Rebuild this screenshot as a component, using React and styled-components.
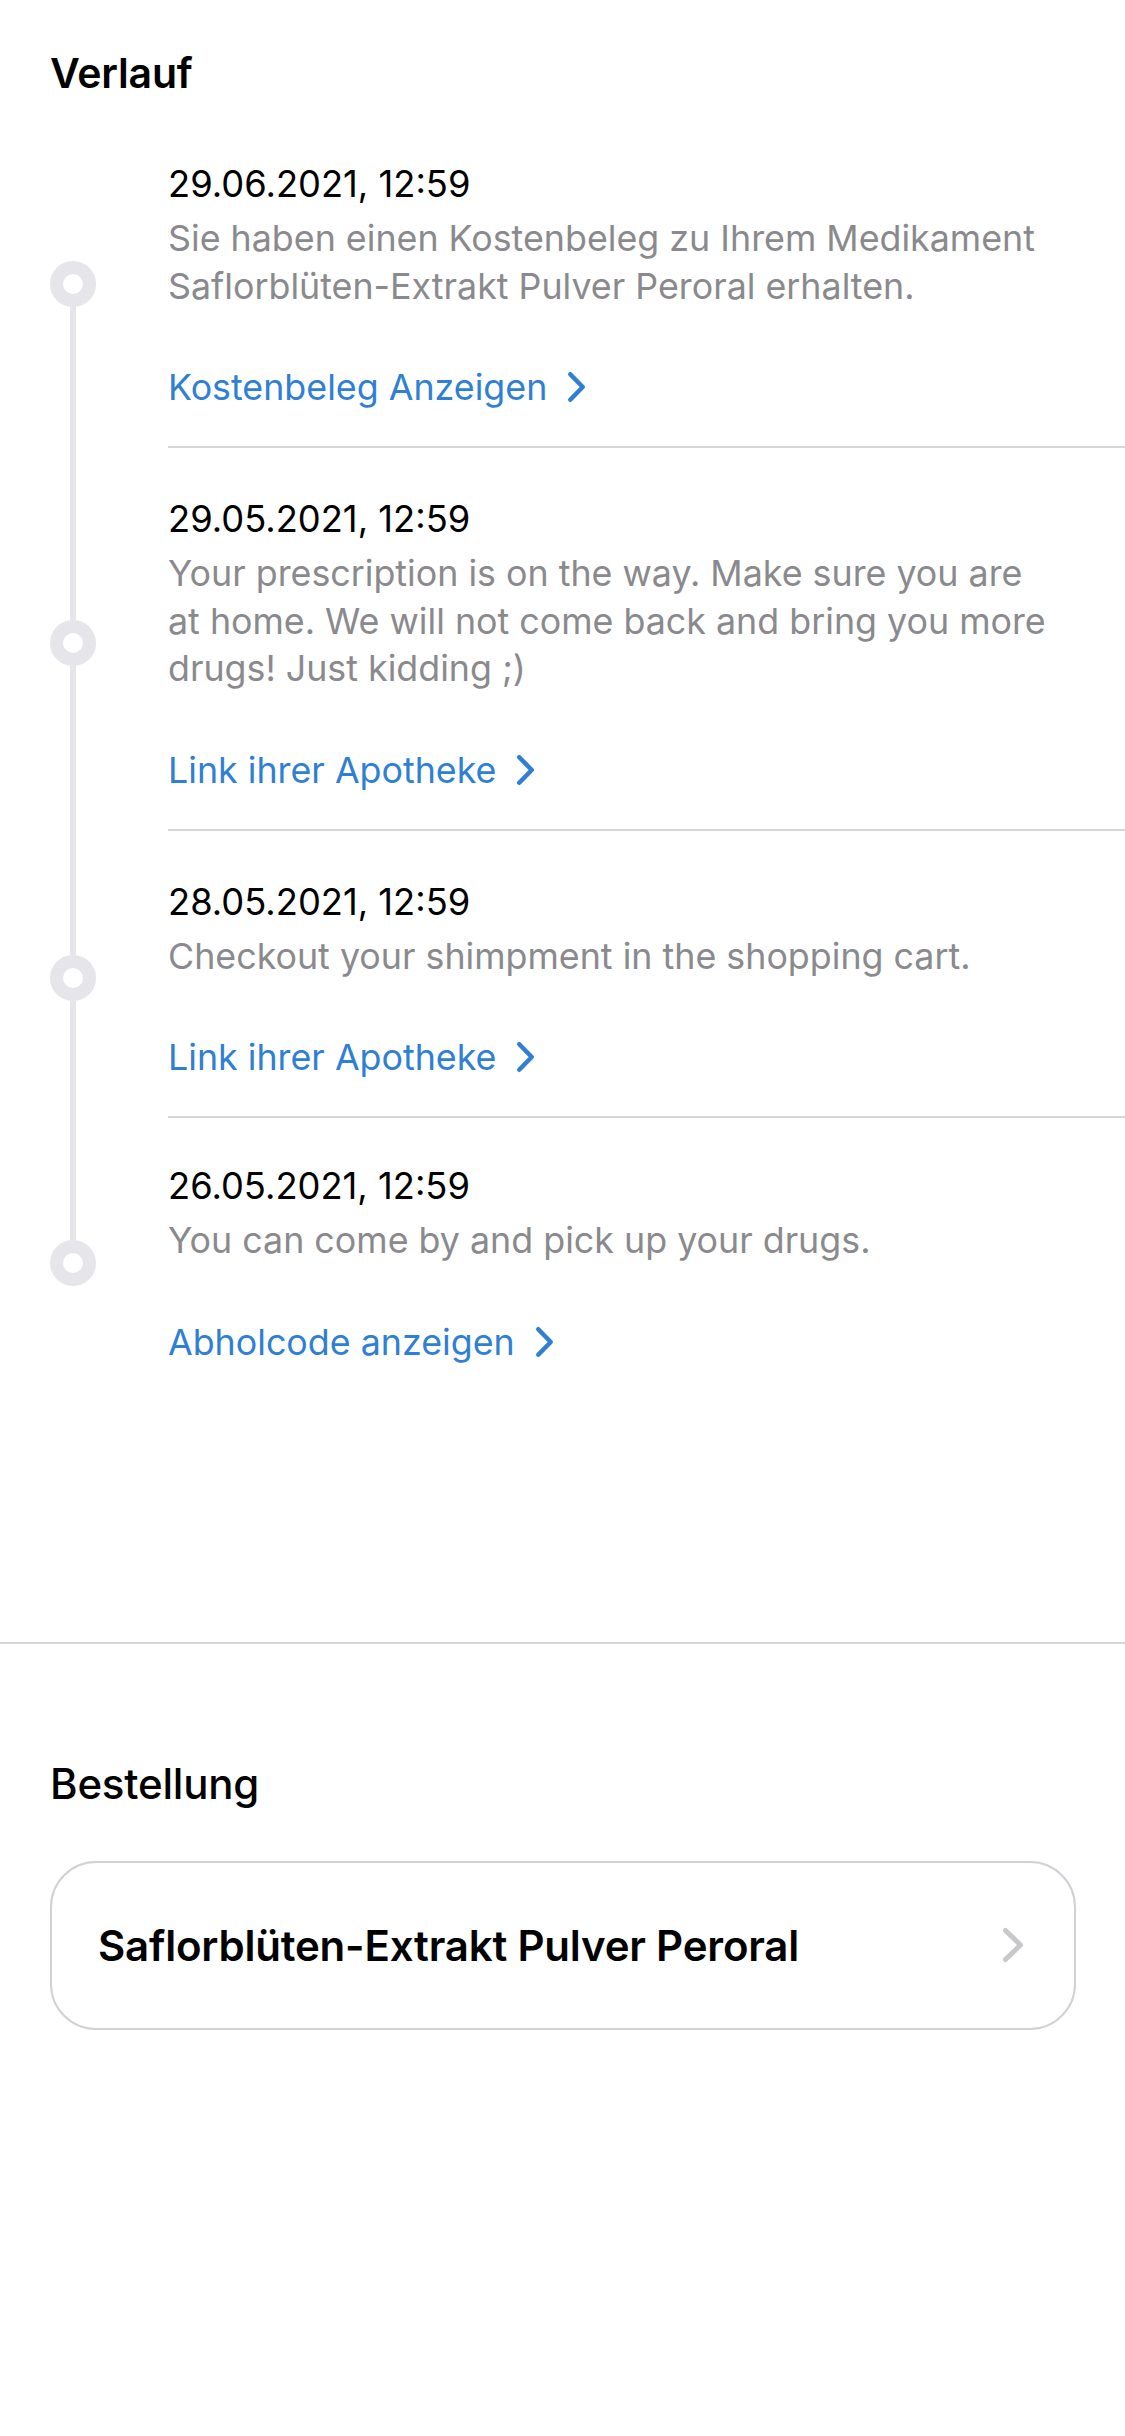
import React from "react";
import styled, { createGlobalStyle } from "styled-components";

const GlobalStyle = createGlobalStyle`
  html, body {
    margin: 0;
    padding: 0;
    background: #ffffff;
  }
  body {
    font-family: Inter, "Noto Sans", "Liberation Sans", sans-serif;
    -webkit-font-smoothing: antialiased;
  }
  * { box-sizing: border-box; }
`;

const Page = styled.main`
  width: 1125px;
  min-height: 2436px;
  background: #fff;
  padding-top: 48px;
`;

const Section = styled.section`
  padding: 0 0 0 50px;
`;

const SectionTitle = styled.h2`
  margin: 0;
  font-size: ${(p) => (p.$medium ? "42px" : "41px")};
  line-height: 50px;
  font-weight: ${(p) => (p.$medium ? 500 : 600)};
  color: #000;
  letter-spacing: -0.2px;
`;

const Timeline = styled.ol`
  list-style: none;
  margin: 15px 0 0 0;
  padding: 0;
`;

const Item = styled.li`
  display: flex;
  align-items: stretch;
`;

const Rail = styled.div`
  width: 46px;
  flex: 0 0 46px;
  display: flex;
  flex-direction: column;
  align-items: center;
`;

const Segment = styled.div`
  flex: 1 0 ${(p) => (p.$lead ? "7px" : "0px")};
  width: 6px;
  background: ${(p) => (p.$hidden ? "transparent" : "#e5e5ea")};
`;

const Dot = styled.div`
  width: 46px;
  height: 46px;
  flex: 0 0 46px;
  border-radius: 50%;
  border: 13px solid #e5e5ea;
  background: #fff;
`;

const Content = styled.div`
  flex: 1;
  margin-left: 72px;
  padding: ${(p) => (p.$last ? "46px" : "49px")} 70px 37px 0;
  border-bottom: ${(p) => (p.$last ? "none" : "2px solid #d6d6d9")};
`;

const Date = styled.div`
  font-size: 36.3px;
  line-height: 44px;
  color: #000;
`;

const Description = styled.p`
  margin: 9px 0 0 0;
  font-size: 35.8px;
  line-height: 47.5px;
  color: #8a8a8e;
`;

const LinkRow = styled.a`
  display: inline-flex;
  align-items: center;
  gap: 20px;
  margin-top: 55px;
  font-size: 35.8px;
  line-height: 44px;
  color: #2f7fd4;
  text-decoration: none;
`;

const Divider = styled.hr`
  margin: 241px 0 0 0;
  border: none;
  height: 2px;
  background: #d6d6d9;
`;

const OrderSection = styled(Section)`
  padding-top: 115px;
  padding-right: 49px;
`;

const Card = styled.button`
  margin-top: 52px;
  width: 100%;
  height: 169px;
  display: flex;
  align-items: center;
  justify-content: space-between;
  padding: 0 50px 0 46px;
  border: 2px solid #d1d1d6;
  border-radius: 46px;
  background: #fff;
  font-family: inherit;
  cursor: pointer;
`;

const CardTitle = styled.span`
  font-size: 42px;
  font-weight: 600;
  color: #000;
  letter-spacing: -0.2px;
`;

const Chevron = ({ color, width, height, stroke }) => (
  <svg
    width={width}
    height={height}
    viewBox={`0 0 ${width} ${height}`}
    fill="none"
    aria-hidden="true"
  >
    <polyline
      points={`${stroke / 2 + 1},${stroke / 2 + 1} ${width - stroke / 2 - 1},${height / 2} ${stroke / 2 + 1},${height - stroke / 2 - 1}`}
      stroke={color}
      strokeWidth={stroke}
      strokeLinecap="round"
      strokeLinejoin="round"
    />
  </svg>
);

const items = [
  {
    date: "29.06.2021, 12:59",
    text: "Sie haben einen Kostenbeleg zu Ihrem Medikament Saflorblüten-Extrakt Pulver Peroral erhalten.",
    link: "Kostenbeleg Anzeigen",
  },
  {
    date: "29.05.2021, 12:59",
    text: "Your prescription is on the way. Make sure you are at home. We will not come back and bring you more drugs! Just kidding ;)",
    link: "Link ihrer Apotheke",
  },
  {
    date: "28.05.2021, 12:59",
    text: "Checkout your shimpment in the shopping cart.",
    link: "Link ihrer Apotheke",
  },
  {
    date: "26.05.2021, 12:59",
    text: "You can come by and pick up your drugs.",
    link: "Abholcode anzeigen",
  },
];

export default function App() {
  return (
    <>
      <GlobalStyle />
      <Page>
        <Section>
          <SectionTitle>Verlauf</SectionTitle>
          <Timeline>
            {items.map((it, i) => {
              const first = i === 0;
              const last = i === items.length - 1;
              return (
                <Item key={i}>
                  <Rail>
                    <Segment $lead $hidden={first} />
                    <Dot />
                    <Segment $hidden={last} />
                  </Rail>
                  <Content $last={last}>
                    <Date>{it.date}</Date>
                    <Description>{it.text}</Description>
                    <LinkRow href="#">
                      {it.link}
                      <Chevron color="#2f7fd4" width={19} height={32} stroke={4.5} />
                    </LinkRow>
                  </Content>
                </Item>
              );
            })}
          </Timeline>
        </Section>
        <Divider />
        <OrderSection>
          <SectionTitle $medium>Bestellung</SectionTitle>
          <Card>
            <CardTitle>Saflorblüten-Extrakt Pulver Peroral</CardTitle>
            <Chevron color="#c7c7cc" width={22} height={36} stroke={5} />
          </Card>
        </OrderSection>
      </Page>
    </>
  );
}
